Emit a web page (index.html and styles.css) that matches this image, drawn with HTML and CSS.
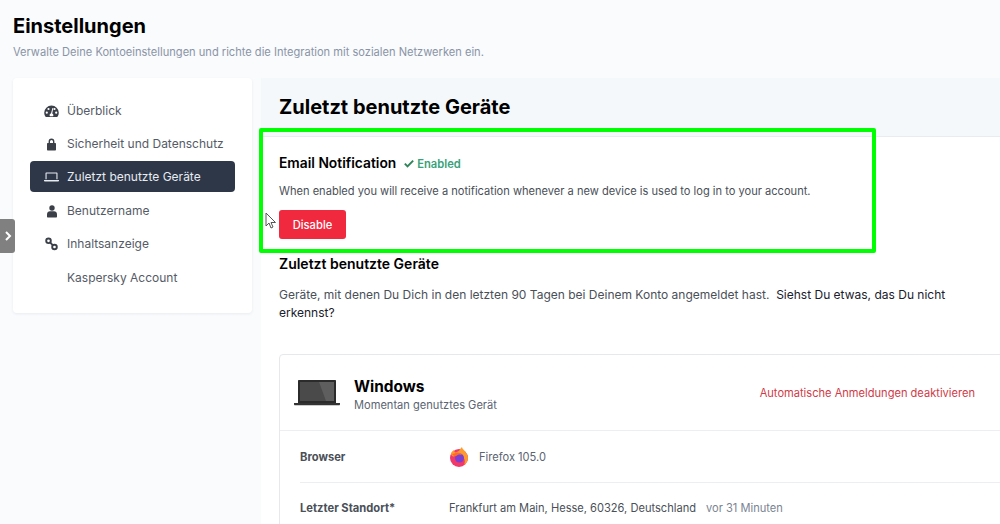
FILE: index.html
```html
<!DOCTYPE html>
<html lang="de">
<head>
<meta charset="utf-8">
<title>Einstellungen</title>
<link rel="stylesheet" href="styles.css">
</head>
<body>
<div class="page">
  <header class="page-head">
    <h1>Einstellungen</h1>
    <p>Verwalte Deine Kontoeinstellungen und richte die Integration mit sozialen Netzwerken ein.</p>
  </header>
  <div class="layout">
    <nav class="side">
      <a class="item"><svg class="ico" viewBox="0 0 15 14"><path fill-rule="evenodd" d="M7.500 1.500A7.300 7.300 0 0 0 .2 8.800c0 1.400.4 2.700 1.100 3.800.2.300.5.400.8.400h10.800c.3 0 .6-.1.800-.4.700-1.100 1.100-2.400 1.100-3.800a7.300 7.300 0 0 0-7.300-7.300zM2.800 9.800a1.100 1.100 0 1 1 0-2.200 1.100 1.100 0 0 1 0 2.200zm1.700-3.700a1.100 1.100 0 1 1 0-2.200 1.100 1.100 0 0 1 0 2.200zM9 12.200H6a1.700 1.700 0 0 1 1-2.800l1.300-5c.2-.6 1-.4.900.2L8.200 9.500A1.700 1.700 0 0 1 9 12.200zm1.500-6.100a1.100 1.100 0 1 1 0-2.200 1.100 1.100 0 0 1 0 2.200zm1.700 3.700a1.100 1.100 0 1 1 0-2.200 1.100 1.100 0 0 1 0 2.200z"/></svg><span>Überblick</span></a>
      <a class="item"><svg class="ico" viewBox="0 0 15 14"><path fill-rule="evenodd" d="M10.400 6V4.500a2.900 2.900 0 0 0-5.800 0V6H4c-.6 0-1 .4-1 1v5.500c0 .6.400 1 1 1h7c.6 0 1-.4 1-1V7c0-.6-.4-1-1-1h-.6zM6 6V4.500a1.500 1.500 0 0 1 3 0V6H6z"/></svg><span>Sicherheit und Datenschutz</span></a>
      <a class="item active"><svg class="ico" viewBox="0 0 15 14"><path fill-rule="evenodd" d="M2.200 3.500h10.600c.4 0 .7.300.7.700V10.300h-1.100V4.600H2.600v5.700H1.500V4.200c0-.4.3-.7.7-.7zM0 11h15v.4c0 .6-.5 1.100-1.100 1.100H1.100C.5 12.500 0 12 0 11.400z"/></svg><span>Zuletzt benutzte Geräte</span></a>
      <a class="item"><svg class="ico" viewBox="0 0 15 14"><circle cx="8" cy="4" r="2.700"/><path d="M6 7.200h4c1.700 0 3 1.300 3 3v2.300c0 .6-.4 1-1 1H4c-.6 0-1-.4-1-1v-2.300c0-1.700 1.300-3 3-3z"/></svg><span>Benutzername</span></a>
      <a class="item"><svg class="ico" viewBox="0 0 15 14"><g fill="none" stroke="currentColor" stroke-width="1.900"><circle cx="4.500" cy="3.800" r="2.300"/><circle cx="10.500" cy="10" r="2.300"/><path d="M6 5.400l3 3"/></g></svg><span>Inhaltsanzeige</span></a>
      <a class="item"><span class="ico"></span><span>Kaspersky Account</span></a>
    </nav>
    <main class="panel">
      <div class="panel-head"><h2>Zuletzt benutzte Geräte</h2></div>
      <div class="panel-body">
        <section class="notify">
          <div class="notify-title">
            <h3 class="notify-h">Email Notification</h3>
            <span class="enabled"><svg viewBox="0 0 12 10"><path d="M1 5.200l3.200 3.200L11 1.600" fill="none" stroke="currentColor" stroke-width="2.400"/></svg>Enabled</span>
          </div>
          <p>When enabled you will receive a notification whenever a new device is used to log in to your account.</p>
          <button class="btn">Disable</button>
        </section>
        <section class="devices">
          <h3>Zuletzt benutzte Geräte</h3>
          <p>Geräte, mit denen Du Dich in den letzten 90 Tagen bei Deinem Konto angemeldet hast. &nbsp;<a>Siehst Du etwas, das Du nicht</a><br><a>erkennst?</a></p>
        </section>
        <section class="card">
          <div class="card-head">
            <svg class="laptop" viewBox="0 0 46 26"><path d="M5 0h36c.6 0 1 .4 1 1v22H4V1c0-.6.4-1 1-1z" fill="#2b2b2b"/><path d="M6 2h34v19H6z" fill="#4a4a4a"/><path d="M25 2h15v19h-8z" fill="#5e5e5e"/><path d="M0 23h46v1.200c0 .5-.4 1-1 1H1c-.6 0-1-.5-1-1z" fill="#333"/></svg>
            <div class="dev-name"><strong>Windows</strong><span>Momentan genutztes Gerät</span></div>
            <a class="deact">Automatische Anmeldungen deaktivieren</a>
          </div>
          <div class="row">
            <b>Browser</b>
            <div class="val"><svg class="fx" viewBox="0 0 20 20"><circle cx="10" cy="11" r="9" fill="#f0386b"/><path d="M2 6c1-1.500 2-2.500 3-3 0 1 .5 2 1.500 2.500C8 5 10 4.500 11 2.500c.5-1 1.500-2 2-2.500 0 1.500 2 3 3.500 5S19 9 19 11a9 9 0 0 1-4 7c1.500-3 1-7-2-9-2-1.500-5-1-7 0-2 1-4 0-4-3z" fill="#ff9a2e"/><circle cx="10.500" cy="11" r="4.500" fill="#7b3fd1"/><path d="M3 7c2 0 3-1 5-1.500 2 0 4 1 5 2.500-2-1-4-.5-5 .5S5 10 3 7z" fill="#ff6a2b"/></svg><span class="fx-text">Firefox 105.0</span></div>
          </div>
          <div class="row row-last">
            <b>Letzter Standort*</b>
            <div class="val"><span>Frankfurt am Main, Hesse, 60326, Deutschland</span><span class="ago">vor 31 Minuten</span></div>
          </div>
        </section>
      </div>
    </main>
  </div>
  <div class="tab"><svg viewBox="0 0 8 10"><path d="M2 1l4 4-4 4" fill="none" stroke="#fff" stroke-width="2"/></svg></div>
  <div class="highlight"></div>
  <svg class="cursor" viewBox="0 0 12 18"><path d="M1 1v13l3-3 2 5 2-1-2-4.500h4.500z" fill="#fff" stroke="#555" stroke-width="1"/></svg>
</div>
</body>
</html>
```
FILE: styles.css
```css
* { box-sizing: border-box; }
html, body { margin: 0; height: 100%; overflow: hidden; }
body { background: #f9fbfd; font-family: Inter, "Liberation Sans", sans-serif; color: #000; }
.page { position: relative; height: 524px; overflow: hidden; padding: 14px 0 0 13px; }
.page-head { height: 64px; }
h1 { margin: 0; font-size: 20px; line-height: 24px; font-weight: 700; color: #000; }
.page-head p { margin: 6px 0 0; font-size: 11.100px; line-height: 16px; color: #8a94a6; }
.layout { display: grid; grid-template-columns: 239px 1fr; column-gap: 9px; align-items: start; }
.side { height: 235px; background: #fff; border-radius: 4px; box-shadow: 0 1px 3px rgba(40,60,90,.08); padding: 16px 17px 0; display: flex; flex-direction: column; }
.item { height: 33.300px; flex: none; display: flex; align-items: center; padding-left: 14px; font-size: 12px; color: #555b66; border-radius: 4px; }
.item .ico { width: 15px; height: 14px; flex: none; margin-right: 8px; fill: #3a3f48; color: #3a3f48; }
.item.active { background: #2d3748; color: #e8ebf0; height: 31px; margin: 0 0 2.300px; }
.item.active .ico { fill: #e8ebf0; }
.panel { background: #fff; min-height: 460px; border-radius: 4px 0 0 0; }
.panel-head { height: 59px; background: #f5f8fb; border-bottom: 1px solid #e8ecf1; padding: 16px 18px 0; }
h2 { margin: 0; font-size: 20px; line-height: 26px; font-weight: 700; color: #000; }
.panel-body { padding: 0 18px; }
.notify { height: 118px; padding-top: 18px; }
.notify-title { display: flex; align-items: center; gap: 8px; height: 17px; }
h3 { margin: 0; font-size: 14px; line-height: 17px; font-weight: 600; color: #000; }
.notify-h { font-size: 13.800px; }
.enabled { display: inline-flex; align-items: center; gap: 3px; font-size: 11.200px; font-weight: 600; color: #38a17a; }
.enabled svg { width: 10px; height: 9px; color: #2f855a; }
.notify p { margin: 11px 0 0; font-size: 11.100px; line-height: 16px; color: #4a5058; }
.btn { display: block; margin-top: 11px; width: 67px; height: 29px; padding: 0; border: 0; border-radius: 3px; background: #f0293e; color: #fff; font: 500 11.200px Inter, "Liberation Sans", sans-serif; }
.devices h3 { line-height: 18px; }
.devices p { margin: 13px 0 0; font-size: 12px; line-height: 18px; color: #4a5058; }
.devices a { color: #1a202c; }
.card { margin-top: 32px; width: 760px; background: #fff; border: 1px solid #e6e8ec; border-radius: 4px; }
.card-head { height: 76px; display: flex; align-items: center; padding: 0 63px 0 14px; border-bottom: 1px solid #eceef1; }
.laptop { width: 46px; height: 26px; flex: none; margin-right: 14px; }
.dev-name { display: flex; flex-direction: column; padding-top: 5px; }
.dev-name strong { font-size: 15.400px; line-height: 20px; font-weight: 700; color: #000; }
.dev-name span { font-size: 11.100px; line-height: 17px; color: #5a6472; }
.deact { margin-left: auto; font-size: 11.100px; color: #cf3a48; white-space: nowrap; }
.row { display: flex; align-items: center; height: 52px; margin: 0 20px; border-bottom: 1px solid #eceef1; font-size: 11.100px; color: #4a5058; }
.row-last { height: 50px; }
.row b { width: 149px; flex: none; font-weight: 700; color: #4a5058; font-size: 11.200px; }
.val { display: flex; align-items: center; }
.fx { width: 20px; height: 20px; margin-right: 10px; }
.fx-text { color: #5a6472; }
.ago { margin-left: 10px; color: #7a8492; }
.tab { position: absolute; left: 0; top: 219px; width: 15px; height: 34px; background: #808080; border-radius: 0 3px 3px 0; display: flex; align-items: center; justify-content: center; }
.tab svg { width: 8px; height: 10px; }
.highlight { position: absolute; left: 259px; top: 128px; width: 617px; height: 125px; border: 4px solid #00ff00; border-radius: 2px; }
.cursor { position: absolute; left: 265px; top: 212px; width: 12px; height: 18px; }
```
